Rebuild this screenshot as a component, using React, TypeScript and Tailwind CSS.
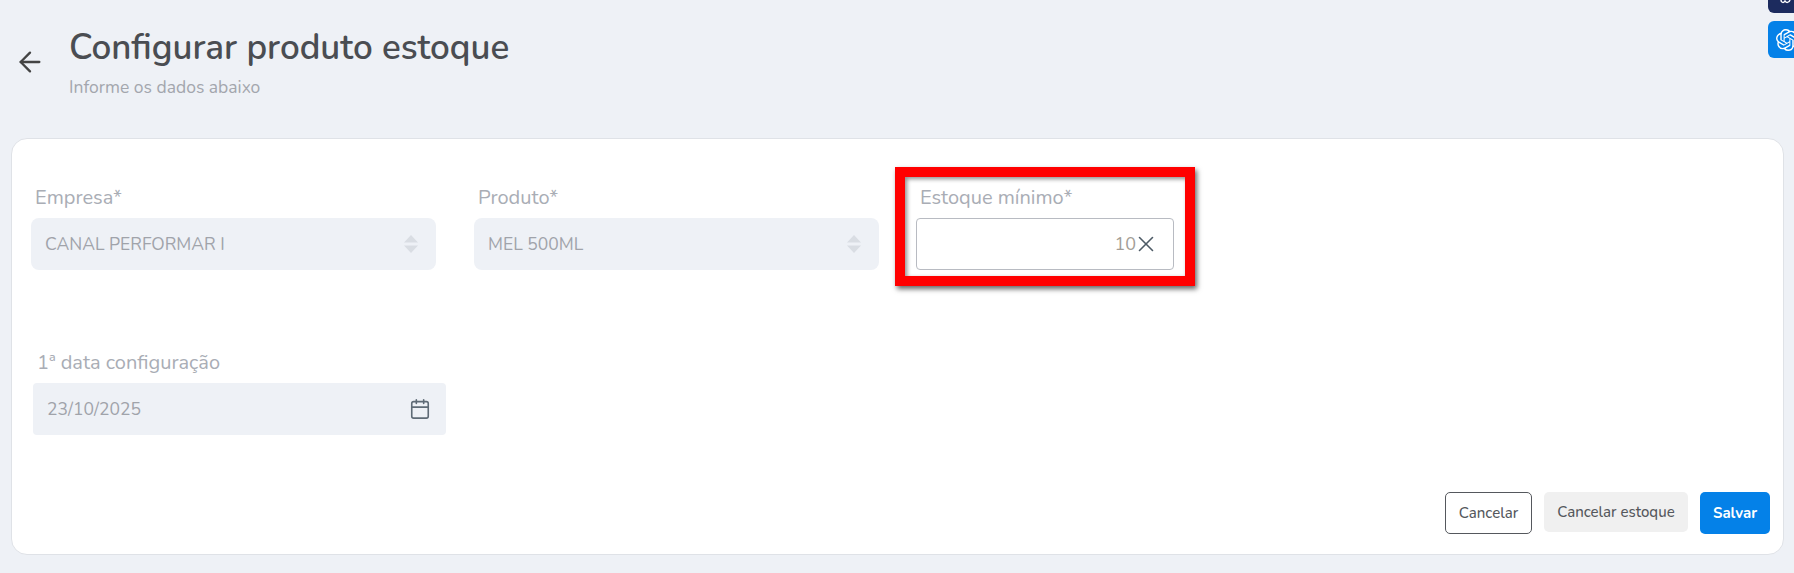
import { ArrowLeft, Calendar, X } from "lucide-react";
import { SiOpenai } from "react-icons/si";

const SortIcon = () => (
  <svg width="16" height="18" viewBox="0 0 16 18" className="fill-[#d9dde3]">
    <path d="M8 0l7 7.500h-14zM8 18l-7-7.500h14z" />
  </svg>
);

const DisabledSelect = ({ label, value }: { label: string; value: string }) => (
  <div className="flex w-[405px] flex-col">
    <label className="mb-[3px] h-[34px] pl-[4px] pt-[2px] text-[20px] leading-[30px] text-[#a9adb5]">{label}</label>
    <div className="flex h-[52px] items-center justify-between rounded-[8px] bg-[#eef1f6] pl-[14px] pr-[17px] text-[17.500px] text-[#a0a3aa]">
      <span>{value}</span>
      <SortIcon />
    </div>
  </div>
);

export default function App() {
  return (
    <div className="relative h-[573px] w-full overflow-hidden bg-[#eef1f6] font-['Nunito','Lato',sans-serif]">
      <div className="flex h-[138px] pl-[14px]">
        <ArrowLeft size={32} strokeWidth={1.75} className="mt-[46px] text-[#444]" />
        <div className="ml-[23px] pt-[24px]">
          <h1 className="text-[35px] leading-[48px] font-semibold text-[#4a4d52]">Configurar produto estoque</h1>
          <p className="mt-[3px] text-[17.500px] leading-[24px] text-[#a3a6ad]">Informe os dados abaixo</p>
        </div>
      </div>

      <div className="ml-[11px] mr-[10px] flex h-[417px] flex-col rounded-[16px] border border-[#dfe2e7] bg-white pl-[19px] pr-[13px] pt-[42px] pb-[20px]">
        <div className="flex gap-[38px]">
          <DisabledSelect label="Empresa*" value="CANAL PERFORMAR I" />
          <DisabledSelect label="Produto*" value="MEL 500ML" />
          <div className="relative ml-[-1px] flex w-[258px] flex-col">
            <label className="mb-[3px] h-[34px] pl-[4px] pt-[2px] text-[20px] leading-[30px] text-[#a9adb5]">Estoque mínimo*</label>
            <div className="flex h-[52px] items-center justify-end rounded-[4px] border border-[#b8bbc2] bg-white pr-[14px] text-[18px] text-[#a39d96]">
              <span>10</span>
              <X size={26} strokeWidth={1.5} className="ml-[-3px] text-[#4d5a66]" />
            </div>
            {/* marcação vermelha do print */}
            <div className="pointer-events-none absolute -left-[21px] -top-[14px] h-[119px] w-[300px] border-[10px] border-[#ff0000] shadow-[2px_3px_5px_rgba(0,0,0,0.6),inset_2px_2px_4px_rgba(0,0,0,0.45)]" />
          </div>
        </div>

        <div className="mt-[76px] ml-[2px] flex w-[413px] flex-col">
          <label className="mb-[3px] h-[34px] pl-[4px] pt-[2px] text-[20px] leading-[30px] text-[#a9adb5]">1ª data configuração</label>
          <div className="flex h-[52px] items-center justify-between rounded-[4px] bg-[#eef1f6] pl-[14px] pr-[15px] text-[17.500px] text-[#a0a3aa]">
            <span>23/10/2025</span>
            <Calendar size={22} strokeWidth={1.75} className="text-[#5f6b76]" />
          </div>
        </div>

        <div className="mt-auto flex items-start justify-end gap-[12px]">
          <button className="h-[42px] w-[87px] rounded-[5px] border border-[#55585d] bg-white text-[15px] font-medium text-[#55585d]">Cancelar</button>
          <button className="h-[40px] w-[144px] rounded-[5px] bg-[#f0f0f0] text-[15px] font-medium text-[#55585d]">Cancelar estoque</button>
          <button className="h-[42px] w-[70px] rounded-[5px] bg-[#0481e8] text-[15px] font-bold text-white">Salvar</button>
        </div>
      </div>

      <div className="absolute right-0 top-0 h-[13px] w-[26px] rounded-bl-[6px] bg-[#1c2b5e] pl-[12px]">
        <svg width="12" height="4" viewBox="0 0 12 4" fill="none" stroke="white" strokeWidth="1.500">
          <path d="M1 0c0 3 3 3 4 1 1 2 4 2 5-1" />
        </svg>
      </div>
      <div className="absolute right-0 top-[21px] flex h-[37px] w-[26px] items-center rounded-l-[6px] bg-[#0481e8] pl-[8px]">
        <SiOpenai size={22} className="shrink-0 text-white" />
      </div>
    </div>
  );
}
